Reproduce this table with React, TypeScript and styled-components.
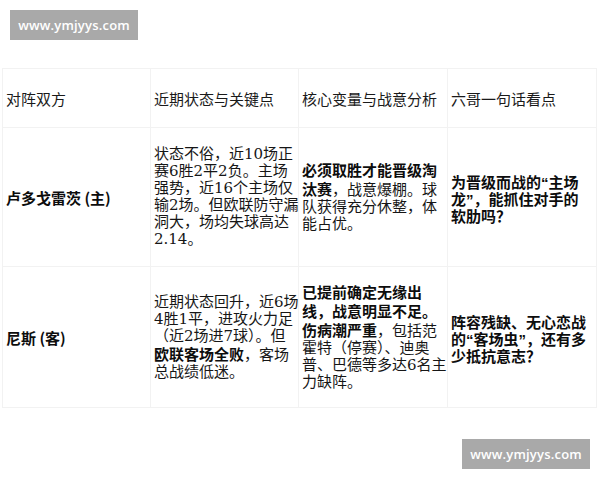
import { FC, ReactNode } from 'react';
import styled, { createGlobalStyle } from 'styled-components';

const GlobalStyle = createGlobalStyle`
  html, body {
    margin: 0;
    padding: 0;
    background: #fff;
  }
  body {
    width: 600px;
    height: 480px;
    overflow: hidden;
    font-family: "Noto Sans CJK SC", sans-serif;
    color: #111;
  }
`;

interface IRow {
  team: string;
  form: ReactNode;
  stakes: ReactNode;
  verdict: ReactNode;
}

const rows: IRow[] = [
  {
    team: '卢多戈雷茨 (主)',
    form: (
      <>
        状态不俗，近10场正<br />
        赛6胜2平2负。主场<br />
        强势，近16个主场仅<br />
        输2场。但欧联防守漏<br />
        洞大，场均失球高达<br />
        2.14。
      </>
    ),
    stakes: (
      <>
        <b>必须取胜才能晋级淘</b><br />
        <b>汰赛</b>，战意爆棚。球<br />
        队获得充分休整，体<br />
        能占优。
      </>
    ),
    verdict: (
      <>
        为晋级而战的“主场<br />
        龙”，能抓住对手的<br />
        软肋吗？
      </>
    ),
  },
  {
    team: '尼斯 (客)',
    form: (
      <>
        近期状态回升，近6场<br />
        4胜1平，进攻火力足<br />
        （近2场进7球）。但<br />
        <b>欧联客场全败</b>，客场<br />
        总战绩低迷。
      </>
    ),
    stakes: (
      <>
        <b>已提前确定无缘出</b><br />
        <b>线，战意明显不足。</b><br />
        <b>伤病潮严重</b>，包括范<br />
        霍特（停赛）、迪奥<br />
        普、巴德等多达6名主<br />
        力缺阵。
      </>
    ),
    verdict: (
      <>
        阵容残缺、无心恋战<br />
        的“客场虫”，还有多<br />
        少抵抗意志？
      </>
    ),
  },
];

const headers = ['对阵双方', '近期状态与关键点', '核心变量与战意分析', '六哥一句话看点'];

const App: FC = () => (
  <>
    <GlobalStyle />
    <SPage>
      <SMarkRow>
        <SMark>www.ymjyys.com</SMark>
      </SMarkRow>

      <STable>
        <colgroup>
          <col style={{ width: 148 }} />
          <col style={{ width: 148 }} />
          <col style={{ width: 149 }} />
          <col style={{ width: 149 }} />
        </colgroup>
        <thead>
          <tr>
            {headers.map((h) => (
              <SHead key={h}>{h}</SHead>
            ))}
          </tr>
        </thead>
        <tbody>
          {rows.map((r, i) => (
            <SRow key={r.team} $height={i === 0 ? 139 : 141}>
              <STeam>{r.team}</STeam>
              <SCell>{r.form}</SCell>
              <SCell>{r.stakes}</SCell>
              <SVerdict>{r.verdict}</SVerdict>
            </SRow>
          ))}
        </tbody>
      </STable>

      <SMarkRow $right>
        <SMark>www.ymjyys.com</SMark>
      </SMarkRow>
    </SPage>
  </>
);

export default App;

const SPage = styled.div`
  display: flex;
  flex-direction: column;
  width: 600px;
  height: 480px;
`;

const SMarkRow = styled.div<{ $right?: boolean }>`
  display: flex;
  justify-content: ${({ $right }) => ($right ? 'flex-end' : 'flex-start')};
  padding: ${({ $right }) => ($right ? '31px 10px 0' : '10px 10px 0')};
`;

const SMark = styled.div`
  width: 128px;
  height: 30px;
  display: flex;
  align-items: center;
  justify-content: center;
  background: #a9a9a9;
  color: #fff;
  font-family: "Open Sans", "Liberation Sans", sans-serif;
  font-size: 13px;
  font-weight: 600;
  letter-spacing: 0.2px;
`;

const STable = styled.table`
  margin: 28px 0 0 2px;
  width: 594px;
  table-layout: fixed;
  border-collapse: collapse;
  font-size: 15px;
  line-height: 17px;
`;

const SHead = styled.th`
  height: 58px;
  padding: 0 3px;
  border: 1px solid #f2f2f2;
  text-align: left;
  vertical-align: middle;
  font-weight: 400;
  color: #1a1a1a;
  white-space: nowrap;
`;

const SRow = styled.tr<{ $height: number }>`
  height: ${({ $height }) => $height}px;
`;

const SCell = styled.td`
  padding: 0 2px 0 3px;
  border: 1px solid #f2f2f2;
  vertical-align: middle;
  white-space: nowrap;
  font-family: "DejaVu Serif", "Noto Sans CJK SC", serif;
  color: #161616;

  & b {
    font-family: "Noto Sans CJK SC", sans-serif;
    font-weight: 700;
    color: #0d0d0d;
  }
`;

const STeam = styled(SCell)`
  font-family: "Noto Sans CJK SC", sans-serif;
  font-weight: 700;
  color: #0d0d0d;
`;

const SVerdict = styled(SCell)`
  padding-top: 4px;
  font-family: "Liberation Sans", "Noto Sans CJK SC", sans-serif;
  font-weight: 700;
  color: #0d0d0d;
`;
